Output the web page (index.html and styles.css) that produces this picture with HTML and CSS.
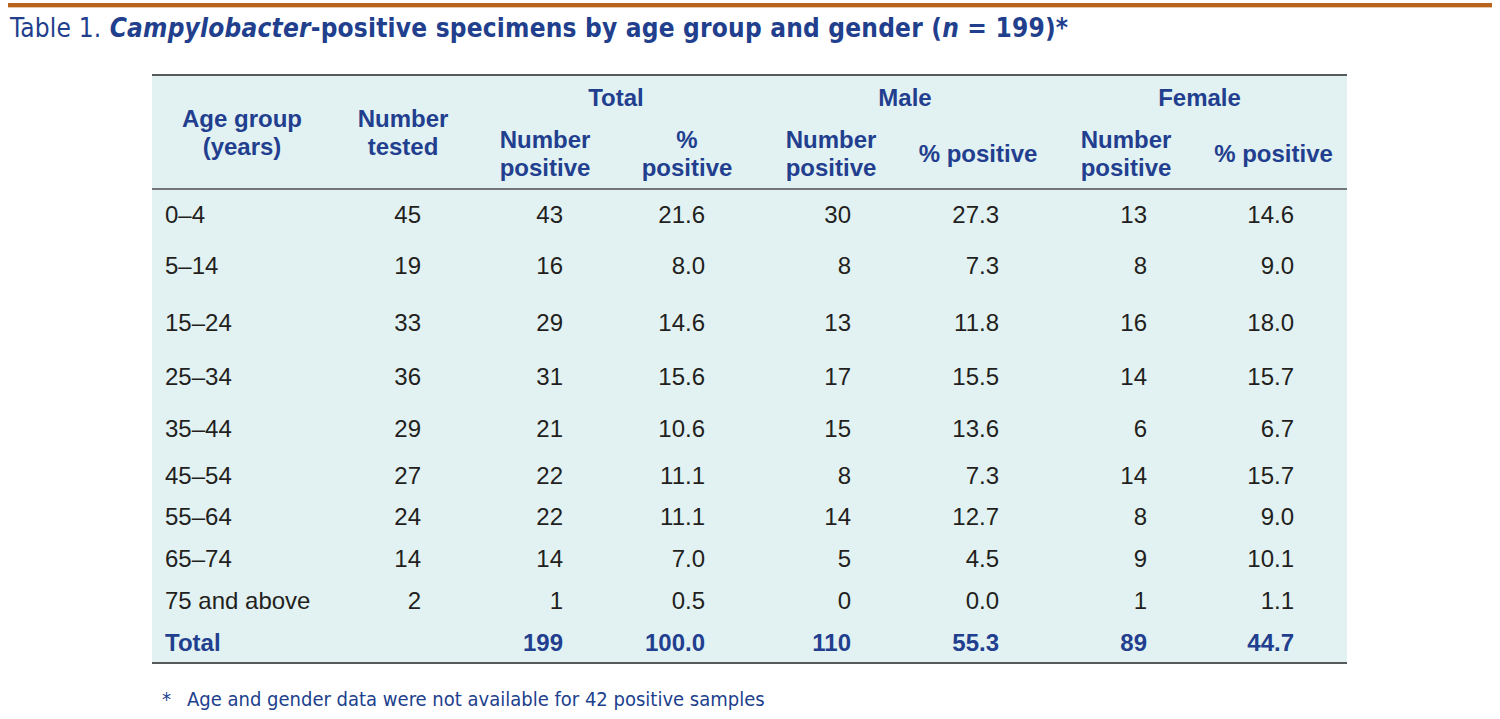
FILE: index.html
```html
<!DOCTYPE html>
<html>
<head>
<meta charset="utf-8">
<link rel="stylesheet" href="styles.css">
</head>
<body>
<div class="page">
  <div class="rule"></div>
  <h1 class="title"><span class="lbl">Table 1.</span> <em>Campylobacter</em>-positive specimens by age group and gender (<em>n</em> = 199)*</h1>
  <table class="data">
    <colgroup>
      <col class="c1"><col class="c2"><col class="c3"><col class="c4"><col class="c5"><col class="c6"><col class="c7"><col class="c8">
    </colgroup>
    <thead>
      <tr class="hr1">
        <th rowspan="2" class="side">Age group<br>(years)</th>
        <th rowspan="2" class="side">Number<br>tested</th>
        <th colspan="2" class="grp">Total</th>
        <th colspan="2" class="grp">Male</th>
        <th colspan="2" class="grp">Female</th>
      </tr>
      <tr class="hr2">
        <th>Number<br>positive</th>
        <th>%<br>positive</th>
        <th>Number<br>positive</th>
        <th class="one">% positive</th>
        <th>Number<br>positive</th>
        <th class="one">% positive</th>
      </tr>
    </thead>
    <tbody>
      <tr class="r52"><td>0–4</td><td>45</td><td>43</td><td>21.6</td><td>30</td><td>27.3</td><td>13</td><td>14.6</td></tr>
      <tr class="r57"><td>5–14</td><td>19</td><td>16</td><td>8.0</td><td>8</td><td>7.3</td><td>8</td><td>9.0</td></tr>
      <tr class="r54"><td>15–24</td><td>33</td><td>29</td><td>14.6</td><td>13</td><td>11.8</td><td>16</td><td>18.0</td></tr>
      <tr class="r52"><td>25–34</td><td>36</td><td>31</td><td>15.6</td><td>17</td><td>15.5</td><td>14</td><td>15.7</td></tr>
      <tr class="r47"><td>35–44</td><td>29</td><td>21</td><td>10.6</td><td>15</td><td>13.6</td><td>6</td><td>6.7</td></tr>
      <tr class="r41"><td>45–54</td><td>27</td><td>22</td><td>11.1</td><td>8</td><td>7.3</td><td>14</td><td>15.7</td></tr>
      <tr class="r42"><td>55–64</td><td>24</td><td>22</td><td>11.1</td><td>14</td><td>12.7</td><td>8</td><td>9.0</td></tr>
      <tr class="r42"><td>65–74</td><td>14</td><td>14</td><td>7.0</td><td>5</td><td>4.5</td><td>9</td><td>10.1</td></tr>
      <tr class="r42"><td>75 and above</td><td>2</td><td>1</td><td>0.5</td><td>0</td><td>0.0</td><td>1</td><td>1.1</td></tr>
      <tr class="r45 total"><td>Total</td><td></td><td>199</td><td>100.0</td><td>110</td><td>55.3</td><td>89</td><td>44.7</td></tr>
    </tbody>
  </table>
  <p class="note"><span class="star">*</span>Age and gender data were not available for 42 positive samples</p>
</div>
</body>
</html>
```
FILE: styles.css
```css
html, body {
  margin: 0;
  padding: 0;
  background: #ffffff;
}
.page {
  padding: 3px 8px 0 8px;
}
.rule {
  height: 4px;
  background: #b8641e;
  border-bottom: 1px solid #e7c8a8;
}
.title {
  margin: 4px 0 0 2px;
  font-family: "Liberation Sans Narrow", "DejaVu Sans Condensed", "Liberation Sans", sans-serif;
  font-size: 26px;
  line-height: 32px;
  letter-spacing: 0.2px;
  font-weight: bold;
  color: #213f8d;
  white-space: nowrap;
}
.title .lbl {
  font-weight: normal;
}
.title em {
  font-style: italic;
}
.data {
  margin: 30px 0 0 144px;
  width: 1195px;
  table-layout: fixed;
  border-collapse: collapse;
  background: #e2f2f2;
  font-family: "Liberation Sans", Arial, sans-serif;
  font-size: 24px;
  color: #231f20;
  border-top: 2px solid #58595b;
  border-bottom: 2px solid #58595b;
}
.c1 { width: 180px; }
.c2 { width: 142px; }
.c3 { width: 142px; }
.c4 { width: 142px; }
.c5 { width: 146px; }
.c6 { width: 148px; }
.c7 { width: 148px; }
.c8 { width: 147px; }
.data th {
  font-weight: bold;
  color: #223f8f;
  text-align: center;
  line-height: 28px;
  padding: 0;
  vertical-align: top;
}
.data thead {
  border-bottom: 2px solid #747577;
}
.hr1 { height: 40px; }
.hr1 .grp { padding-top: 8px; }
.hr1 .side { padding-top: 29px; }
.hr2 { height: 74px; }
.hr2 th { padding-top: 11px; }
.hr2 th.one { padding-top: 25px; }
.data td {
  text-align: right;
  padding: 12px 53px 0 0;
  vertical-align: top;
  line-height: 26px;
}
.data td:first-child {
  text-align: left;
  padding: 12px 0 0 13px;
}
.r57 { height: 57px; }
.r54 { height: 54px; }
.r52 { height: 52px; }
.r47 { height: 47px; }
.r45 { height: 45px; }
.r42 { height: 42px; }
.r41 { height: 41px; }
.total td {
  font-weight: bold;
  color: #223f8f;
}
.note {
  margin: 23px 0 0 154px;
  font-family: "Liberation Sans Narrow", "DejaVu Sans Condensed", "Liberation Sans", sans-serif;
  font-size: 20px;
  color: #213f8d;
}
.star {
  display: inline-block;
  width: 25px;
}
```
